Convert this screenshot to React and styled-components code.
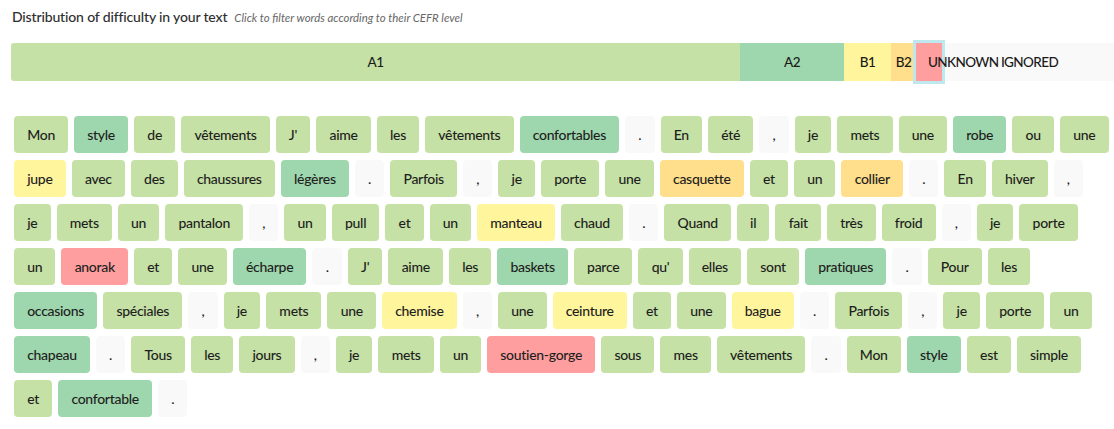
import React from "react";
import styled, { createGlobalStyle } from "styled-components";

const GlobalStyle = createGlobalStyle`
  html, body { margin: 0; padding: 0; background: #fff; overflow: hidden; }
  body { font-family: "Lato", "Liberation Sans", sans-serif; color: #222; }
`;

const LEVELS = {
  A1: { bg: "#c5e1a5", label: "A1" },
  A2: { bg: "#9ed7ad", label: "A2" },
  B1: { bg: "#fff59d", label: "B1" },
  B2: { bg: "#ffdf8b", label: "B2" },
  UNK: { bg: "#ff9e9e", label: "UNKNOWN" },
  IGN: { bg: "#f9f9f9", label: "IGNORED" },
};

const SEGMENTS = [
  { level: "A1", width: 729 },
  { level: "A2", width: 104 },
  { level: "B1", width: 47 },
  { level: "B2", width: 25 },
  { level: "UNK", width: 26, active: true },
  { level: "IGN", width: 175 },
];

const TEXT = `Mon|A2:style|de|vêtements|J'|aime|les|vêtements|A2:confortables|.|En|été|,|je|mets|une|A2:robe|ou|une|B1:jupe|avec|des|chaussures|A2:légères|.|Parfois|,|je|porte|une|B2:casquette|et|un|B2:collier|.|En|hiver|,|je|mets|un|pantalon|,|un|pull|et|un|B1:manteau|chaud|.|Quand|il|fait|très|froid|,|je|porte|un|UNK:anorak|et|une|A2:écharpe|.|J'|aime|les|A2:baskets|parce|qu'|elles|sont|A2:pratiques|.|Pour|les|A2:occasions|spéciales|,|je|mets|une|B1:chemise|,|une|B1:ceinture|et|une|B1:bague|.|Parfois|,|je|porte|un|A2:chapeau|.|Tous|les|jours|,|je|mets|un|UNK:soutien-gorge|sous|mes|vêtements|.|Mon|A2:style|est|simple|et|A2:confortable|.`;

const TOKENS = TEXT.split("|").map((raw) => {
  const m = raw.match(/^(A1|A2|B1|B2|UNK):(.+)$/);
  if (m) return { level: m[1], word: m[2] };
  if (raw === "." || raw === ",") return { level: "IGN", word: raw };
  return { level: "A1", word: raw };
});

const Page = styled.div`
  width: 1106px;
  padding: 8px 0 0 11px;
`;

const Header = styled.div`
  display: flex;
  align-items: baseline;
  gap: 7px;
  height: 20px;
  padding-left: 1px;
`;

const Title = styled.h2`
  margin: 0;
  font-size: 14px;
  font-weight: 500;
  letter-spacing: -0.15px;
  color: #2e2e2e;
`;

const Hint = styled.span`
  font-size: 11.4px;
  font-style: italic;
  color: #666;
`;

const Bar = styled.div`
  display: flex;
  height: 38px;
  margin-top: 15px;
  border-radius: 3px;
`;

const Segment = styled.div`
  flex: none;
  box-sizing: border-box;
  display: flex;
  align-items: center;
  justify-content: center;
  padding: 0 12px;
  background: ${(p) => p.$bg};
  font-size: 13.5px;
  font-weight: 500;
  letter-spacing: -0.6px;
  color: #1a1a1a;
  white-space: nowrap;
  cursor: pointer;
  min-width: 0;
  &:first-child { border-radius: 3px 0 0 3px; }
  ${(p) =>
    p.$active &&
    `
    position: relative;
    z-index: 1;
    justify-content: flex-start;
    box-shadow: 0 0 0 3px #bfe7ee;
  `}
`;

const SegLabel = styled.span`
  flex: none;
`;

const Words = styled.div`
  display: flex;
  flex-wrap: wrap;
  gap: 7px 6px;
  margin-top: 35px;
  padding: 0 3px;
`;

const Token = styled.span`
  box-sizing: border-box;
  height: 37px;
  display: inline-flex;
  align-items: center;
  justify-content: center;
  padding: 0 13.2px;
  border-radius: 4px;
  background: ${(p) => p.$bg};
  font-size: 14px;
  font-weight: 500;
  letter-spacing: -0.3px;
  color: #1e1e1e;
  white-space: nowrap;
  cursor: pointer;
`;

export default function App() {
  return (
    <Page>
      <GlobalStyle />
      <Header>
        <Title>Distribution of difficulty in your text</Title>
        <Hint>Click to filter words according to their CEFR level</Hint>
      </Header>
      <Bar>
        {SEGMENTS.map((s) => (
          <Segment
            key={s.level}
            $bg={LEVELS[s.level].bg}
            $active={s.active}
            style={{ width: s.width }}
          >
            <SegLabel>{LEVELS[s.level].label}</SegLabel>
          </Segment>
        ))}
      </Bar>
      <Words>
        {TOKENS.map((t, i) => (
          <Token key={i} $bg={LEVELS[t.level].bg}>
            {t.word}
          </Token>
        ))}
      </Words>
    </Page>
  );
}
